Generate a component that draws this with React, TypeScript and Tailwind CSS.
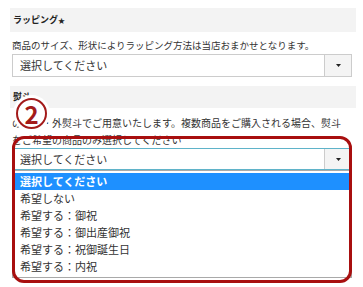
import type { FC } from 'react'

const font = { fontFamily: '"Noto Sans CJK JP", "Noto Sans", sans-serif' }

const Caret: FC = () => (
  <svg width="5" height="3" viewBox="0 0 5 3" className="text-[#222]">
    <path d="M0 0h5L2.5 3z" fill="currentColor" />
  </svg>
)

const SelectBox: FC<{ focused?: boolean }> = ({ focused }) => (
  <div
    className={
      focused
        ? 'flex h-[22px] border border-[#5fb3c9] bg-white'
        : 'flex h-[23px] border border-[#cccccc] bg-white'
    }
  >
    <div className="flex flex-1 items-center pl-[7px] text-[11px] text-[#333]">選択してください</div>
    <div className="flex w-[27px] items-center justify-center border-l border-[#cccccc] bg-[#f4f4f4]">
      <Caret />
    </div>
  </div>
)

const options = ['希望しない', '希望する：御祝', '希望する：御出産御祝', '希望する：祝御誕生日', '希望する：内祝']

export default function App() {
  return (
    <div className="relative h-[287px] w-[363px] overflow-hidden bg-white" style={font}>
      <div className="pl-[10px] pr-[7px] pt-[8px]">
        <div className="flex h-[24px] items-center bg-[#f3f3f3] px-[3px] text-[9px] font-bold text-[#222]">
          ラッピング<span className="text-[7px]">★</span>
        </div>
        <div className="ml-[2px] mr-[4px]">
          <p className="mt-[7px] whitespace-nowrap text-[9.5px] leading-[12px] text-[#333]">
            商品のサイズ、形状によりラッピング方法は当店おまかせとなります。
          </p>
          <div className="mt-[3px]">
            <SelectBox />
          </div>
        </div>
        <div className="mt-[9px] flex h-[22px] items-center bg-[#f3f3f3] px-[3px] text-[9px] font-bold text-[#222]">
          熨斗
        </div>
        <div className="ml-[2px] mr-[4px]">
          <p className="mt-[6px] whitespace-nowrap text-[10px] leading-[17px] text-[#333]">
            のし紙・外熨斗でご用意いたします。複数商品をご購入される場合、熨斗
            <br />
            をご希望の商品のみ選択してください
          </p>
          <SelectBox focused />
          <div className="h-[108px] border border-[#a9a9a9] bg-white pt-[2px] text-[11px] text-[#333]">
            <div className="flex h-[17px] items-center bg-[#1e90ff] pl-[7px] font-bold text-white">
              選択してください
            </div>
            {options.map(o => (
              <div key={o} className="flex h-[17px] items-center pl-[7px]">
                {o}
              </div>
            ))}
          </div>
        </div>
      </div>

      <div className="absolute left-[12px] top-[136px] h-[147px] w-[340px] rounded-[12px] border-[3px] border-[#a80f0f]" />
      <div className="absolute left-[16px] top-[98px] flex h-[31px] w-[31px] items-center justify-center rounded-full border-2 border-[#a31a1a] bg-white text-[24px] font-bold leading-none text-[#a31a1a] shadow-[0_0_0_3px_white]">
        2
      </div>
    </div>
  )
}
